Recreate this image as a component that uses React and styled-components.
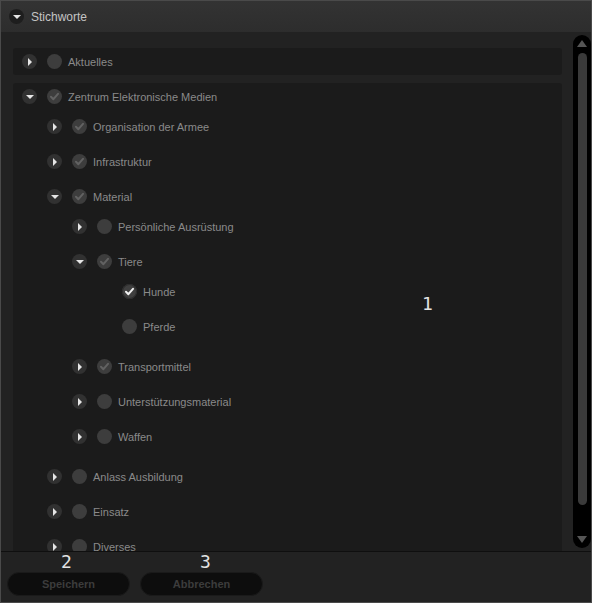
import React from "react";
import styled, { createGlobalStyle } from "styled-components";

const tree = [
  { label: "Aktuelles", state: "none", open: false, hasChildren: true },
  {
    label: "Zentrum Elektronische Medien",
    state: "partial",
    open: true,
    children: [
      { label: "Organisation der Armee", state: "partial", hasChildren: true },
      { label: "Infrastruktur", state: "partial", hasChildren: true },
      {
        label: "Material",
        state: "partial",
        open: true,
        children: [
          { label: "Persönliche Ausrüstung", state: "none", hasChildren: true },
          {
            label: "Tiere",
            state: "partial",
            open: true,
            children: [
              { label: "Hunde", state: "checked" },
              { label: "Pferde", state: "none" },
            ],
          },
          { label: "Transportmittel", state: "partial", hasChildren: true },
          { label: "Unterstützungsmaterial", state: "none", hasChildren: true },
          { label: "Waffen", state: "none", hasChildren: true },
        ],
      },
      { label: "Anlass Ausbildung", state: "none", hasChildren: true },
      { label: "Einsatz", state: "none", hasChildren: true },
      { label: "Diverses", state: "none", hasChildren: true },
    ],
  },
];

const TreeNode = ({ node, level }) => {
  const expandable = node.hasChildren || node.children;
  return (
    <Node>
      <Row $level={level}>
        {expandable ? (
          <Toggle>
            <Arrow $open={node.open} />
          </Toggle>
        ) : (
          <ToggleSpacer />
        )}
        <Check $state={node.state}>
          {node.state !== "none" && (
            <svg width="11" height="11" viewBox="0 0 11 11">
              <path
                d="M2 5.8 L4.4 8.2 L9 2.8"
                fill="none"
                stroke={node.state === "checked" ? "#f2f2f2" : "#626262"}
                strokeWidth="2"
                strokeLinecap="round"
                strokeLinejoin="round"
              />
            </svg>
          )}
        </Check>
        <Label>{node.label}</Label>
      </Row>
      {node.open && node.children && (
        <Children>
          {node.children.map((c) => (
            <TreeNode key={c.label} node={c} level={level + 1} />
          ))}
        </Children>
      )}
    </Node>
  );
};

const App = () => {
  return (
    <>
      <GlobalStyle />
      <Panel>
        <Header>
          <HeaderToggle>
            <Arrow $open />
          </HeaderToggle>
          <Title>Stichworte</Title>
        </Header>
        <Content>
          <List>
            {tree.map((n) => (
              <Box key={n.label}>
                <TreeNode node={n} level={0} />
              </Box>
            ))}
          </List>
          <ScrollTrack>
            <ScrollArrow $up />
            <Thumb />
            <ScrollArrow />
          </ScrollTrack>
          <Marker $x={421} $y={263} $size={18}>
            1
          </Marker>
        </Content>
        <Footer>
          <Button>Speichern</Button>
          <Button>Abbrechen</Button>
          <Marker $x={60} $y={1} $size={18}>
            2
          </Marker>
          <Marker $x={199} $y={1} $size={18}>
            3
          </Marker>
        </Footer>
      </Panel>
    </>
  );
};

export default App;

const GlobalStyle = createGlobalStyle`
  html, body {
    margin: 0;
    padding: 0;
    background: #222222;
  }
  * {
    box-sizing: border-box;
  }
`;

const Panel = styled.div`
  width: 592px;
  height: 603px;
  border: 1px solid #4a4a4a;
  background: #222222;
  display: flex;
  flex-direction: column;
  font-family: "Liberation Sans", Arial, sans-serif;
  overflow: hidden;
`;

const Header = styled.div`
  height: 31px;
  flex: none;
  display: flex;
  align-items: center;
  padding-left: 8px;
  gap: 7px;
  background: linear-gradient(#333333, #2d2d2d);
`;

const HeaderToggle = styled.div`
  width: 15px;
  height: 15px;
  border-radius: 50%;
  background: #1e1e1e;
  display: flex;
  align-items: center;
  justify-content: center;
`;

const Title = styled.span`
  font-size: 12px;
  color: #c4c4c4;
`;

const Content = styled.div`
  position: relative;
  height: 520px;
  flex: none;
  display: flex;
  border-bottom: 1px solid #0f0f0f;
  background: #222222;
`;

const List = styled.div`
  width: 561px;
  flex: none;
  padding: 16px 0 0 12px;
  display: flex;
  flex-direction: column;
  gap: 8px;
  overflow: hidden;
`;

const Box = styled.div`
  background: #1b1b1b;
  border-radius: 3px;
  padding: 1px 0;
  flex: none;
`;

const Node = styled.div`
  display: flex;
  flex-direction: column;
`;

const Children = styled.div`
  display: flex;
  flex-direction: column;
  gap: 10px;
  padding: 5px 0;
`;

const Row = styled.div`
  height: 25px;
  display: flex;
  align-items: center;
  padding-left: ${({ $level }) => 9 + $level * 25}px;
`;

const Toggle = styled.div`
  width: 15px;
  height: 15px;
  border-radius: 50%;
  background: #313131;
  display: flex;
  align-items: center;
  justify-content: center;
  margin-right: 10px;
  flex: none;
`;

const ToggleSpacer = styled.div`
  width: 15px;
  margin-right: 10px;
  flex: none;
`;

const Arrow = styled.div`
  width: 0;
  height: 0;
  ${({ $open }) =>
    $open
      ? `
    border-left: 4px solid transparent;
    border-right: 4px solid transparent;
    border-top: 4px solid #e6e6e6;
    margin-top: 1px;
  `
      : `
    border-top: 4px solid transparent;
    border-bottom: 4px solid transparent;
    border-left: 4px solid #e6e6e6;
    margin-left: 1px;
  `}
`;

const Check = styled.div`
  width: 15px;
  height: 15px;
  border-radius: 50%;
  flex: none;
  background: ${({ $state }) => ($state === "checked" ? "#3f3f3f" : "#3d3d3d")};
  box-shadow: ${({ $state }) =>
    $state === "checked" ? "inset 0 0 0 1px #2c2c2c" : "none"};
  display: flex;
  align-items: center;
  justify-content: center;
`;

const Label = styled.span`
  margin-left: 6px;
  font-size: 11px;
  color: #8a8a8a;
  white-space: nowrap;
`;

const ScrollTrack = styled.div`
  width: 18px;
  margin: 3px 0 3px 11px;
  background: #000000;
  border-radius: 9px;
  display: flex;
  flex-direction: column;
  align-items: center;
  padding: 5px 0 6px;
`;

const ScrollArrow = styled.div`
  width: 0;
  height: 0;
  flex: none;
  border-left: 5px solid transparent;
  border-right: 5px solid transparent;
  ${({ $up }) =>
    $up
      ? "border-bottom: 7px solid #555555; margin-bottom: 6px;"
      : "border-top: 7px solid #555555; margin-top: 31px;"}
`;

const Thumb = styled.div`
  width: 9px;
  height: 452px;
  border-radius: 5px;
  background: #3a3a3a;
  flex: none;
`;

const Footer = styled.div`
  position: relative;
  flex: 1;
  display: flex;
  align-items: flex-start;
  gap: 10px;
  padding: 20px 0 0 6px;
  background: #222222;
`;

const Button = styled.button`
  width: 123px;
  height: 24px;
  border-radius: 12px;
  border: 1px solid #1a1a1a;
  background: #0d0d0d;
  color: #3c3c3c;
  font-family: "Liberation Sans", Arial, sans-serif;
  font-weight: bold;
  font-size: 11px;
  padding: 0;
`;

const Marker = styled.span`
  position: absolute;
  left: ${({ $x }) => $x}px;
  top: ${({ $y }) => $y}px;
  font-family: "DejaVu Sans Mono", monospace;
  font-size: ${({ $size }) => $size}px;
  line-height: 1;
  color: #e2e2e2;
`;
